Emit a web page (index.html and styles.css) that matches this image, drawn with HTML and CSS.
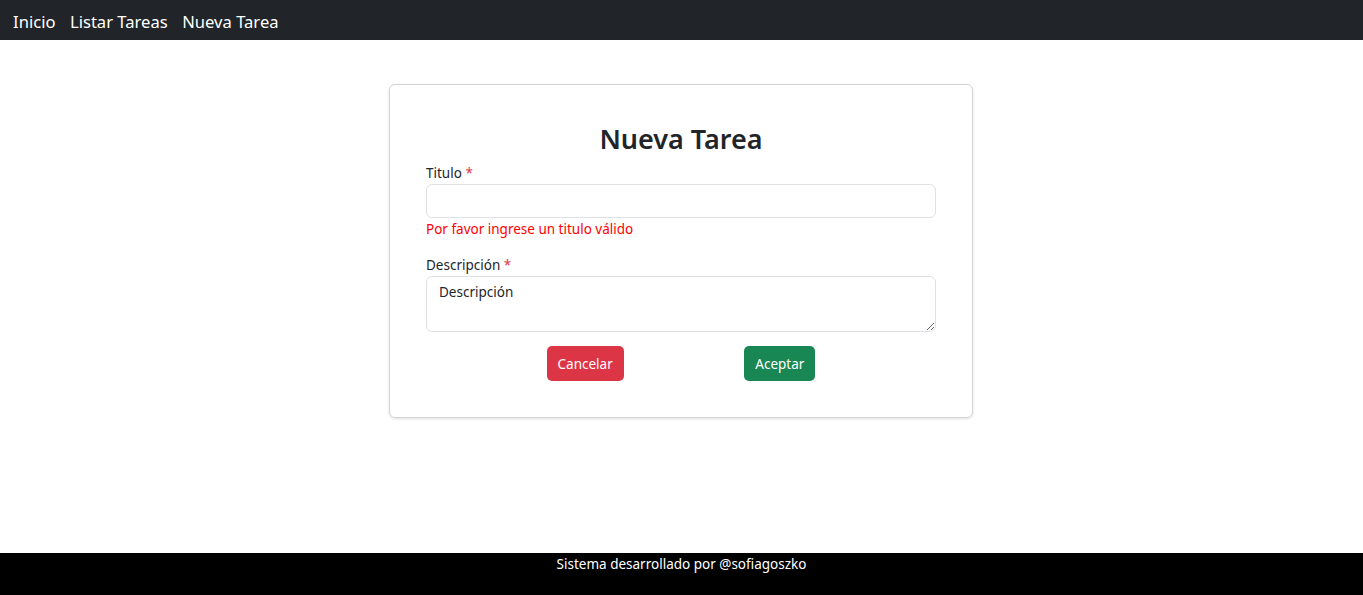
FILE: index.html
```html
<!DOCTYPE html>
<html lang="es">
<head>
<meta charset="utf-8">
<title>Nueva Tarea</title>
<link rel="stylesheet" href="styles.css">
</head>
<body>
<nav class="navbar">
  <a class="nav-link" href="#">Inicio</a>
  <a class="nav-link" href="#">Listar Tareas</a>
  <a class="nav-link" href="#">Nueva Tarea</a>
</nav>
<main class="main">
  <form class="card">
    <h2 class="card-title">Nueva Tarea</h2>
    <div class="field">
      <label class="label">Titulo <span class="req">*</span></label>
      <input class="input" type="text">
      <div class="error">Por favor ingrese un titulo válido</div>
    </div>
    <div class="field">
      <label class="label">Descripción <span class="req">*</span></label>
      <textarea class="input textarea" placeholder="Descripción"></textarea>
    </div>
    <div class="actions">
      <button type="button" class="btn btn-danger">Cancelar</button>
      <button type="button" class="btn btn-success">Aceptar</button>
    </div>
  </form>
</main>
<footer class="footer">Sistema desarrollado por @sofiagoszko</footer>
</body>
</html>
```
FILE: styles.css
```css
* { box-sizing: border-box; }
html, body { height: 100%; }
body {
  margin: 0;
  font-family: "Noto Sans", "Open Sans", sans-serif;
  color: #212529;
  display: flex;
  flex-direction: column;
  background: #fff;
}
.navbar {
  height: 40px;
  background: #212529;
  display: flex;
  align-items: center;
  padding: 2px 13px 0;
  gap: 14.5px;
  flex: none;
}
.nav-link {
  color: #fff;
  text-decoration: none;
  font-size: 16.6px;
}
.main {
  flex: 1;
  display: flex;
  justify-content: center;
  align-items: flex-start;
  padding-top: 44px;
  padding-right: 1px;
}
.card {
  width: 584px;
  border: 1px solid #d4d4d4;
  border-radius: 6px;
  box-shadow: 0 1px 3px rgba(0,0,0,0.12);
  padding: 36px 36px 36px;
  display: flex;
  flex-direction: column;
}
.card-title {
  margin: 0 0 6px;
  text-align: center;
  font-size: 27px;
  font-weight: 600;
  line-height: 36px;
}
.field { display: flex; flex-direction: column; margin-bottom: 12px; }
.label { font-size: 13.5px; line-height: 20px; margin-bottom: 1px; }
.req { color: #dc3545; }
.input {
  width: 100%;
  height: 34px;
  border: 1px solid #dee2e6;
  border-radius: 6px;
  font-family: inherit;
  font-size: 13.5px;
  color: #212529;
  padding: 6px 12px;
  outline: none;
}
.textarea { height: 56px; resize: vertical; }
.textarea::placeholder { color: #212529; }
.error { color: #ff0000; font-size: 13.5px; line-height: 20px; margin-top: 1px; margin-bottom: 4px; }
.actions {
  display: flex;
  justify-content: space-evenly;
  margin-top: 2px;
}
.btn {
  border: none;
  border-radius: 5px;
  color: #fff;
  font-family: inherit;
  font-size: 13.5px;
  height: 35px;
  padding: 0 11px;
}
.btn-danger { background: #dc3545; }
.btn-success { background: #198754; }
.footer {
  flex: none;
  height: 42px;
  background: #000;
  color: #fff;
  text-align: center;
  font-size: 13.5px;
  line-height: 22px;
}
```
